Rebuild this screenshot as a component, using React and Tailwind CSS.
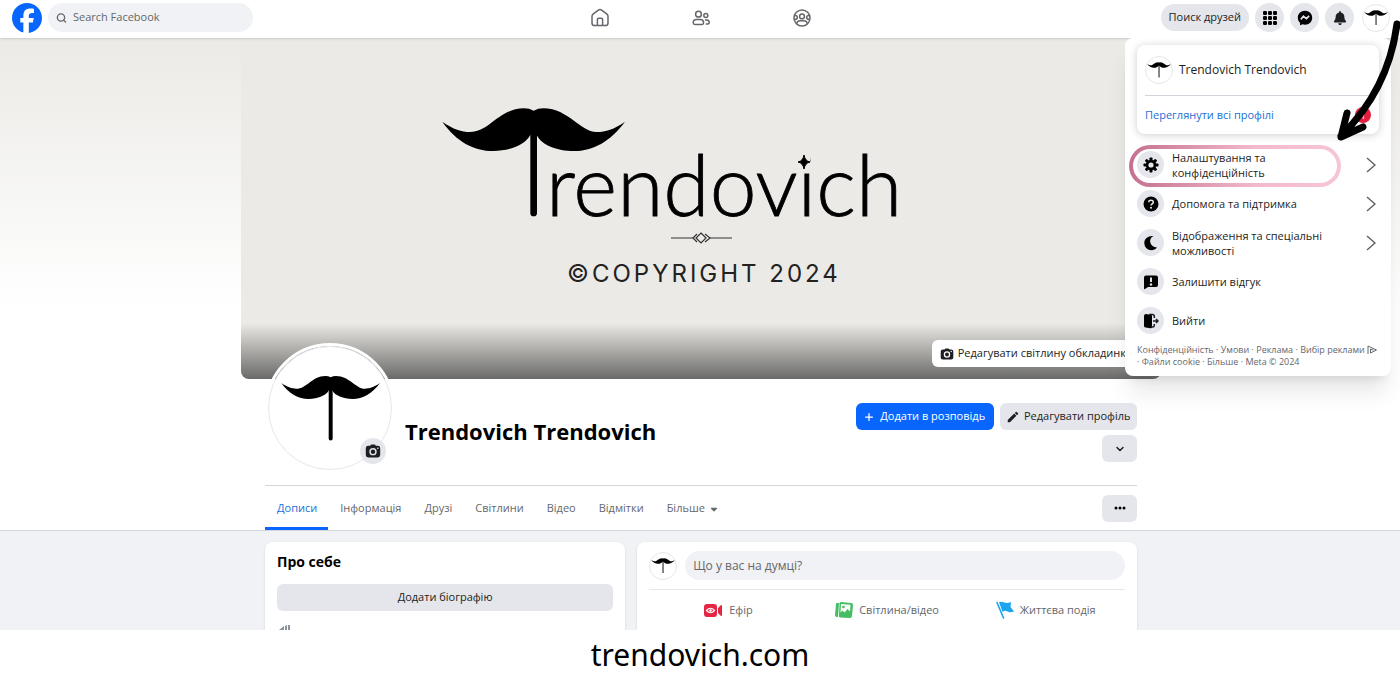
// src/App.jsx
import { FaFacebook, FaBell, FaPlus, FaCaretDown } from "react-icons/fa6";
import { MdModeEdit } from "react-icons/md";
import { ChevronDown, Search } from "lucide-react";

const TABS = ["Дописи", "Інформація", "Друзі", "Світлини", "Відео", "Відмітки"];

const MOUSTACHE =
  "M67 95C100 118 125 126 150 126C210 126 235 56 312 55Q328 55 341 62Q354 55 370 55C447 56 480 126 530 126C557 126 582 118 615 95C570 155 520 183 462 183C410 183 365 165 350 135L331 135C315 165 270 183 220 183C160 183 110 155 67 95Z";

function LogoMark({ className }) {
  return (
    <svg viewBox="60 50 560 370" className={className} aria-hidden="true">
      <path d={MOUSTACHE} />
      <path d="M341 120V402" stroke="#000" strokeWidth="22" strokeLinecap="round" />
    </svg>
  );
}

function SmallAvatar() {
  return (
    <span className="flex size-7 shrink-0 items-center justify-center rounded-full border border-gray-200 bg-white">
      <LogoMark className="w-6" />
    </span>
  );
}

function Wordmark() {
  return (
    <svg viewBox="1 0 560 210" className="h-[210px] w-[560px] max-w-full" role="img" aria-label="Trendovich">
      <g transform="scale(0.3333)">
        <path d={MOUSTACHE} />
        <path d="M341 120V369" stroke="#000" strokeWidth="20" strokeLinecap="round" />
      </g>
      <text x="126" y="126" fontSize="84" stroke="#000" strokeWidth="0.8" className="font-['Lato'] font-light">
        rendovich
      </text>
      <circle cx="383" cy="68" r="8" fill="#ebeae6" />
      <path d="M384 65Q385 71 390 72Q385 73 384 79Q383 73 378 72Q383 71 384 65Z" stroke="#000" />
      <g fill="none" stroke="#333" strokeWidth="1.2">
        <path d="M251 148H273M290 148H312" />
        <path d="M281 143L286 148L281 153L276 148ZM277 144L273 148L277 152M285 144L290 148L285 152" />
      </g>
      <text x="147" y="192" fontSize="24" fill="#222" className="font-['Inter'] tracking-[3px]">©COPYRIGHT 2024</text>
    </svg>
  );
}

function CameraIcon({ className }) {
  return (
    <svg viewBox="0 0 20 20" className={className} fill="currentColor" fillRule="evenodd" aria-hidden="true">
      <path d="M6.5 3.5Q7.2 2 8.5 2H11.5Q12.8 2 13.5 3.5H16Q19 3.5 19 6.5V15Q19 18 16 18H4Q1 18 1 15V6.5Q1 3.5 4 3.5ZM10 6.2A4.6 4.6 0 1 0 10 15.4A4.6 4.6 0 1 0 10 6.2ZM10 8A2.8 2.8 0 1 1 10 13.6A2.8 2.8 0 1 1 10 8ZM16 5.5A1 1 0 1 0 16 7.5A1 1 0 1 0 16 5.5Z" />
    </svg>
  );
}

function NavIcons() {
  const props = {
    viewBox: "0 0 20 20",
    className: "size-5",
    fill: "none",
    stroke: "currentColor",
    strokeWidth: 1.5,
  };
  return (
    <nav className="flex text-[#65676b]">
      <a href="#home" aria-label="Home" className="flex w-[101px] justify-center">
        <svg {...props}>
          <path d="M2 8.2Q2 7 3 6.2L8.4 2.1Q10 1 11.6 2.1L17 6.2Q18 7 18 8.2V15Q18 17.6 15.4 17.6H4.6Q2 17.6 2 15Z" />
          <path d="M7.4 17.4V11.5Q7.4 10.2 8.7 10.2H11.3Q12.6 10.2 12.6 11.5V17.4" />
        </svg>
      </a>
      <a href="#friends" aria-label="Friends" className="flex w-[101px] justify-center">
        <svg {...props}>
          <circle cx="7.5" cy="6.2" r="2.9" />
          <circle cx="14.8" cy="7.6" r="2" />
          <path d="M5.5 11.6H9.5Q12.6 11.6 12.6 14.8Q12.6 16.4 11 16.4H4Q2.2 16.4 2.2 14.8Q2.2 11.6 5.5 11.6ZM14 12H15.5Q18.3 12 18.3 14.6Q18.3 16 17 16H14.8" />
        </svg>
      </a>
      <a href="#groups" aria-label="Groups" className="flex w-[101px] justify-center">
        <svg {...props}>
          <circle cx="10" cy="10" r="8" />
          <circle cx="10" cy="8.4" r="2.4" />
          <path d="M4.8 15.8Q5 12.8 8 12.8H12Q15 12.8 15.2 15.8M2.6 7.4Q5.4 7.2 5.4 9.3T2.6 11.5M17.4 7.4Q14.6 7.2 14.6 9.3T17.4 11.5" />
        </svg>
      </a>
    </nav>
  );
}

const ROUND_BUTTON = "flex size-[29px] shrink-0 items-center justify-center rounded-full bg-[#e4e6eb]";

function Header() {
  return (
    <header className="relative z-10 grid h-[38px] grid-cols-[1fr_auto_1fr] items-center bg-white pr-2.5 pb-[3px] pl-3 shadow-sm">
      <div className="flex items-center gap-1.5">
        <a href="#facebook" aria-label="Facebook">
          <FaFacebook className="size-[30px] text-[#0866ff]" />
        </a>
        <label className="flex h-[29px] w-[205px] items-center gap-1.5 rounded-full bg-[#f0f2f5] px-2 text-[#65676b]">
          <Search size={12} strokeWidth={3} />
          <input
            type="search"
            aria-label="Search Facebook"
            placeholder="Search Facebook"
            className="w-full bg-transparent text-[11px] outline-none placeholder:text-[#65676b]"
          />
        </label>
      </div>
      <NavIcons />
      <div className="flex items-center justify-end gap-1.5">
        <button className="h-[27px] rounded-full bg-[#e4e6eb] px-2 text-[11px] font-medium whitespace-nowrap">
          Поиск друзей
        </button>
        <button className={ROUND_BUTTON} aria-label="Menu">
          <svg viewBox="0 0 14 14" className="size-3.5">
            {[0, 5, 10].map((y) =>
              [0, 5, 10].map((x) => <rect key={`${x}-${y}`} x={x} y={y} width="4" height="4" rx="1.2" />)
            )}
          </svg>
        </button>
        <button className={ROUND_BUTTON} aria-label="Messenger">
          <svg viewBox="0 0 20 20" className="size-4">
            <path d="M10 1C4.800 1 1 4.800 1 9.700C1 12.300 2.100 14.500 3.800 16V18.300Q3.900 19.200 4.800 18.900L7 17.900Q8.400 18.400 10 18.400C15.200 18.400 19 14.600 19 9.700C19 4.800 15.200 1 10 1Z" />
            <path d="M4.800 12L8 7.800L11.700 10.800L15.200 7.400" fill="none" stroke="#e4e6eb" strokeWidth="2" />
          </svg>
        </button>
        <button className={ROUND_BUTTON} aria-label="Notifications">
          <FaBell className="size-3.5" />
        </button>
        <button className="ml-0.5" aria-label="Account">
          <SmallAvatar />
        </button>
      </div>
    </header>
  );
}

function GearIcon() {
  return (
    <svg viewBox="0 0 16 16" className="size-4" aria-hidden="true">
      {[0, 45, 90, 135].map((angle) => (
        <rect key={angle} x="6.5" y="0.5" width="3" height="15" rx="0.8" transform={`rotate(${angle} 8 8)`} />
      ))}
      <circle cx="8" cy="8" r="5.2" />
      <circle cx="8" cy="8" r="2.6" fill="#e4e6eb" />
    </svg>
  );
}

function MenuRow({ icon, label, arrow, highlighted }) {
  return (
    <button className="relative flex min-h-[39px] w-full items-center gap-2 py-1 text-left">
      {highlighted && (
        <span className="absolute top-0 right-[38px] -bottom-[3px] -left-2 rounded-full border-4 border-transparent [background:linear-gradient(#fff,#fff)_padding-box,linear-gradient(to_right,#c4708e,#f3b9cd_60%,#f6c6d6)_border-box]" />
      )}
      <span className="relative flex size-[27px] shrink-0 items-center justify-center rounded-full bg-[#e4e6eb]">
        {icon}
      </span>
      <span className="relative w-[160px] text-[11px] leading-[15px] font-medium">{label}</span>
      {arrow && (
        <svg viewBox="0 0 10 16" className="mr-[3px] ml-auto h-4 w-2.5" fill="none" stroke="#606266" strokeWidth="1.5">
          <path d="M1 1L9 8L1 15" />
        </svg>
      )}
    </button>
  );
}

function AccountMenu() {
  return (
    <aside className="absolute top-[38px] right-[9px] z-20 w-[266px] rounded-lg bg-white px-3 pt-[7px] pb-2 shadow-xl">
      <div className="mb-[11px] rounded-lg bg-white px-2 shadow-[0_1px_8px_rgba(0,0,0,0.2)]">
        <div className="flex h-[51px] items-center gap-1.5 border-b border-gray-300">
          <SmallAvatar />
          <span className="text-xs font-medium">Trendovich Trendovich</span>
        </div>
        <div className="flex h-[38px] items-center justify-between">
          <a href="#profiles" className="text-[11px] font-medium text-[#1b6fd6]">Переглянути всі профілі</a>
          <span className="flex size-4 items-center justify-center rounded-full bg-[#e41e3f] text-[10px] text-white">1</span>
        </div>
      </div>

      <MenuRow highlighted arrow label="Налаштування та конфіденційність" icon={<GearIcon />} />
      <MenuRow
        arrow
        label="Допомога та підтримка"
        icon={
          <svg viewBox="0 0 16 16" className="size-4">
            <circle cx="8" cy="8" r="7.500" />
            <path d="M5.700 6.300Q5.700 4.200 8 4.200T10.300 6.200Q10.300 7.300 9 8Q8 8.500 8 9.500" fill="none" stroke="#e4e6eb" strokeWidth="1.500" />
            <circle cx="8" cy="11.800" r="1" fill="#e4e6eb" />
          </svg>
        }
      />
      <MenuRow
        arrow
        label="Відображення та спеціальні можливості"
        icon={
          <svg viewBox="0 0 16 16" className="size-4">
            <path d="M10.500 1C7.500 2.500 6.700 5 7.300 7.600C8 10.600 10.700 12.600 14 12.500C12.500 14.400 10.600 15.200 8.500 15.200A7 7 0 0 1 1.300 8C1.300 3.800 5 .5 10.500 1Z" />
          </svg>
        }
      />
      <MenuRow
        label="Залишити відгук"
        icon={
          <svg viewBox="0 0 16 16" className="size-4">
            <path d="M3 1.500H13Q15 1.500 15 3.500V11Q15 13 13 13H5L2 15Q1 15.500 1 14.300V3.500Q1 1.500 3 1.500Z" />
            <path d="M8 3.500V8" stroke="#e4e6eb" strokeWidth="2" />
            <circle cx="8" cy="10.500" r="1.200" fill="#e4e6eb" />
          </svg>
        }
      />
      <MenuRow
        label="Вийти"
        icon={
          <svg viewBox="0 0 16 16" className="size-4">
            <path d="M1 3Q1 1 3 1L8.500 2Q9 2.100 9 3V14Q9 15.500 7.500 15.300L2.500 14.500Q1 14.200 1 13Z" />
            <path d="M6 1.500H9.500Q11.300 1.500 11.300 3.300V5M11.300 11V12.500Q11.300 14 9.500 14H8M10 8H15M13 6L15 8L13 10" fill="none" stroke="currentColor" strokeWidth="1.500" />
          </svg>
        }
      />

      <p className="mt-1 text-[9px] leading-3 text-[#65676b]">
        <span className="flex items-center whitespace-nowrap">
          Конфіденційність · Умови · Реклама · Вибір реклами
          <svg viewBox="0 0 10 10" className="ml-0.5 size-2.5 shrink-0" fill="none" stroke="currentColor">
            <path d="M1 9V1L9.500 5L3.500 8V4L6.500 5.200" />
          </svg>
        </span>
        · Файли cookie · Більше · Meta © 2024
      </p>
    </aside>
  );
}

function PointerArrow() {
  return (
    <svg
      viewBox="0 0 70 145"
      className="pointer-events-none absolute top-0 right-0 z-30 w-[70px]"
      fill="none"
      stroke="#000"
      strokeWidth="7"
      strokeLinecap="round"
      strokeLinejoin="round"
      aria-hidden="true"
    >
      <path d="M67 24C62 62 47 101 11 136M17 113L11 137L33 127" />
    </svg>
  );
}

const GRAY_BUTTON = "flex h-[27px] items-center justify-center rounded-md bg-[#e4e6eb] text-[11px] font-medium";

function Profile() {
  return (
    <section className="bg-white bg-[linear-gradient(#ebeae6,#fff_270px)] pl-0.5">
      {/* Cover */}
      <div className="relative mx-auto flex h-[341px] max-w-[920px] items-start justify-center overflow-hidden rounded-b-lg bg-[#ebeae6] pt-[52px]">
        <Wordmark />
        <div className="absolute inset-x-0 bottom-0 h-14 bg-linear-to-b from-transparent to-black/55" />
        <button className="absolute right-5 bottom-3 flex h-[27px] items-center gap-1 rounded-md bg-white px-2 text-[11px] font-medium whitespace-nowrap">
          <CameraIcon className="size-3.5" />
          Редагувати світлину обкладинки
        </button>
      </div>

      <div className="mx-auto max-w-[920px] px-6">
        <div className="flex h-[107px] items-start border-b border-gray-300">
          <div className="relative -mt-9 size-[130px] shrink-0 rounded-full border-3 border-white">
            <div className="flex size-full items-center justify-center rounded-full border border-gray-200 bg-white">
              <LogoMark className="w-[101px]" />
            </div>
            <button
              aria-label="Change profile picture"
              className="absolute right-1.5 bottom-1.5 flex size-[26px] items-center justify-center rounded-full bg-[#e4e6eb]"
            >
              <CameraIcon className="size-4" />
            </button>
          </div>
          <h1 className="mt-[35px] ml-2.5 text-[22px] leading-[34px] font-bold whitespace-nowrap text-black">
            Trendovich Trendovich
          </h1>
          <div className="mt-6 ml-auto flex w-[281px] flex-wrap justify-end gap-x-1.5 gap-y-[5px]">
            <button className="flex h-[27px] flex-1 items-center justify-center gap-1.5 rounded-md bg-[#0866ff] text-[11px] font-medium whitespace-nowrap text-white">
              <FaPlus className="size-2.5" />
              Додати в розповідь
            </button>
            <button className={`${GRAY_BUTTON} flex-1 gap-1 whitespace-nowrap`}>
              <MdModeEdit className="size-3.5" />
              Редагувати профіль
            </button>
            <button className={`${GRAY_BUTTON} w-[35px]`} aria-label="More profiles">
              <ChevronDown size={12} strokeWidth={3} />
            </button>
          </div>
        </div>

        {/* Tabs */}
        <div className="flex h-11 items-center justify-between">
          <nav className="flex h-full text-[11px] font-medium text-[#65676b]">
            {TABS.map((tab, i) => (
              <a
                key={tab}
                href={`#tab-${i}`}
                className={`flex items-center border-b-3 pt-1 pr-[11px] pl-3 ${i === 0 ? "border-[#0866ff] text-[#1b6fd6]" : "border-transparent"}`}
              >
                {tab}
              </a>
            ))}
            <button className="flex items-center gap-1 border-b-3 border-transparent px-3 pt-1">
              Більше
              <FaCaretDown className="size-2.5" />
            </button>
          </nav>
          <button className={`${GRAY_BUTTON} w-[35px]`} aria-label="More actions">
            <svg viewBox="0 0 12 4" className="w-3">
              <circle cx="2" cy="2" r="1.500" />
              <circle cx="6" cy="2" r="1.500" />
              <circle cx="10" cy="2" r="1.500" />
            </svg>
          </button>
        </div>
      </div>
    </section>
  );
}

function AboutCard() {
  return (
    <section className="rounded-t-lg bg-white px-3 pt-2 shadow-sm">
      <h2 className="text-sm leading-6 font-bold text-black">Про себе</h2>
      <button className={`${GRAY_BUTTON} mt-2.5 w-full`}>Додати біографію</button>
      <svg viewBox="0 0 14 12" className="mt-3.5 w-3.5" fill="#8c939d" aria-hidden="true">
        <path d="M2 5L7 1V12H2ZM8 1L10 0V12H8ZM11 0H13V12H11Z" />
      </svg>
    </section>
  );
}

function ComposerCard() {
  return (
    <section className="rounded-t-lg bg-white px-3 pt-[9px] shadow-sm">
      <div className="flex items-center gap-2 border-b border-gray-200 pb-[9px]">
        <SmallAvatar />
        <input
          type="text"
          aria-label="Що у вас на думці?"
          placeholder="Що у вас на думці?"
          className="h-[29px] w-full rounded-full bg-[#f0f2f5] px-2 text-xs outline-none placeholder:text-[#65676b]"
        />
      </div>
      <div className="grid h-10 grid-cols-3 text-[11px] font-medium text-[#65676b]">
        <button className="flex items-center justify-center gap-1.5">
          <svg viewBox="0 0 19 15" className="w-[19px]">
            <path d="M3 1H10Q13 1 13 4V11Q13 14 10 14H3Q0 14 0 11V4Q0 1 3 1ZM14 5L17 2Q18 1.500 18 3V12Q18 13.500 17 13L14 10Z" fill="#e42645" />
            <path d="M2.500 7.500Q6.500 3 10.500 7.500Q6.500 12 2.500 7.500Z" fill="none" stroke="#fff" strokeWidth="1.200" />
            <circle cx="6.500" cy="7.500" r="1.300" fill="#fff" />
          </svg>
          Ефір
        </button>
        <button className="flex items-center justify-center gap-1.5">
          <svg viewBox="0 0 18 17" className="w-[18px]">
            <path d="M1 2Q1 1 2 1H4L3 15H2Q0 15 0 13Z" fill="#45bd62" />
            <path d="M6 0L16 1Q18 1 18 3L17 14Q17 16 15 16L5 15.500Q3.500 15 4 13L4.500 2Q4.500 0 6 0Z" fill="#45bd62" />
            <path d="M6 2L15.500 2.800L15 9.500L12.500 7L9.500 10.500L7.500 8.500L5.500 10.500Z" fill="#fff" />
            <circle cx="8.500" cy="5" r="1.300" fill="#45bd62" />
          </svg>
          Світлина/відео
        </button>
        <button className="flex items-center justify-center gap-1.5">
          <svg viewBox="0 0 18 18" className="w-[18px]">
            <path d="M1 1.500L7.500 17" fill="none" stroke="#1ba5ee" strokeWidth="1.600" strokeLinecap="round" />
            <path d="M3 1Q6 .5 8.500 1.500T15 1L14.500 6L18 10.500Q14 12 11.500 10.500T6.500 11Z" fill="#1ba5ee" />
          </svg>
          Життєва подія
        </button>
      </div>
    </section>
  );
}

export default function App() {
  return (
    <div className="relative overflow-hidden bg-white font-['Open_Sans','Noto_Sans',sans-serif] text-[#1c1e21]">
      <Header />
      <AccountMenu />
      <PointerArrow />
      <main>
        <Profile />
        <div className="h-[100px] overflow-hidden border-t border-gray-300 bg-[#f0f2f5] pt-[11px] pl-0.5">
          <div className="mx-auto grid max-w-[920px] grid-cols-[361fr_501fr] gap-3 px-6">
            <AboutCard />
            <ComposerCard />
          </div>
        </div>
      </main>
      <footer className="flex h-[70px] items-start justify-center pt-1.5 font-['Noto_Sans',sans-serif] text-[30px] leading-[38px] text-black">
        trendovich.com
      </footer>
    </div>
  );
}
